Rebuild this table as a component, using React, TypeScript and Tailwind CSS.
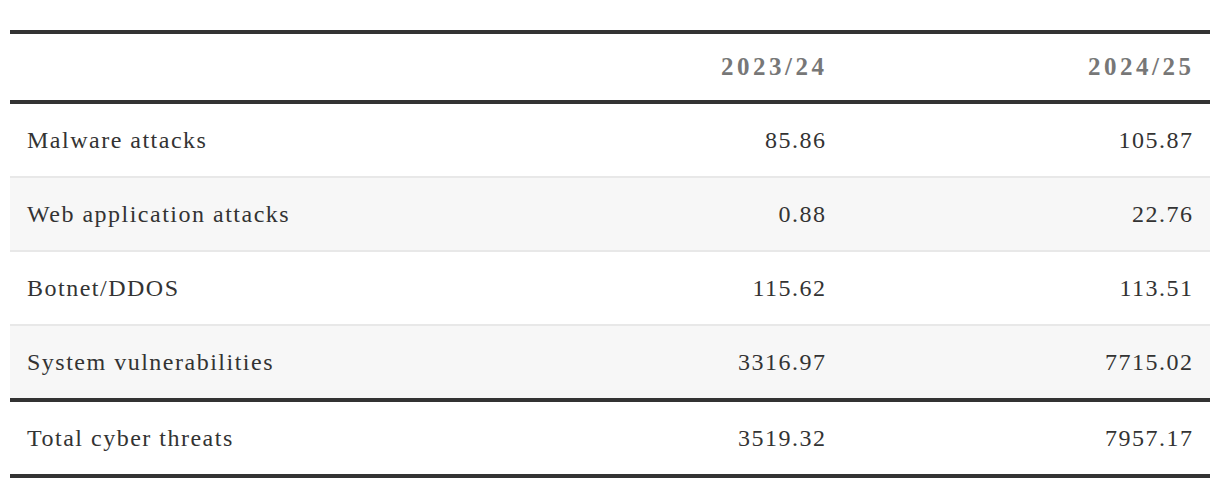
const rows = [
  { label: 'Malware attacks', a: '85.86', b: '105.87' },
  { label: 'Web application attacks', a: '0.88', b: '22.76' },
  { label: 'Botnet/DDOS', a: '115.62', b: '113.51' },
  { label: 'System vulnerabilities', a: '3316.97', b: '7715.02' },
]

const Row = ({
  label,
  a,
  b,
  className,
}: {
  label: string
  a: string
  b: string
  className?: string
}) => (
  <div
    className={`grid h-[72px] grid-cols-[465px_368px_367px] items-center text-[24px] tracking-[1.5px] ${className ?? ''}`}
  >
    <div className="px-[17px]">{label}</div>
    <div className="pr-[16.5px] text-right">{a}</div>
    <div className="pr-[16.5px] text-right">{b}</div>
  </div>
)

export default function App() {
  return (
    <div className="min-h-[488px] bg-white px-[10px] pt-[30px] font-['Liberation_Serif',serif] text-[#333]">
      <div className="w-[1200px]">
        <div className="grid h-[74px] grid-cols-[465px_368px_367px] items-center border-y-4 border-[#333] text-[25px] font-bold tracking-[3.5px] text-[#777]">
          <div />
          <div className="pr-[15.5px] text-right">2023/24</div>
          <div className="pr-[15.5px] text-right">2024/25</div>
        </div>
        {rows.map((r, i) => (
          <Row
            key={r.label}
            {...r}
            className={`${i % 2 === 1 ? 'bg-[#f7f7f7]' : 'bg-white'} ${
              i < rows.length - 1 ? 'box-content border-b-2 border-[#e8e8e8]' : ''
            }`}
          />
        ))}
        <Row
          label="Total cyber threats"
          a="3519.32"
          b="7957.17"
          className="box-content border-y-4 border-[#333]"
        />
      </div>
    </div>
  )
}
